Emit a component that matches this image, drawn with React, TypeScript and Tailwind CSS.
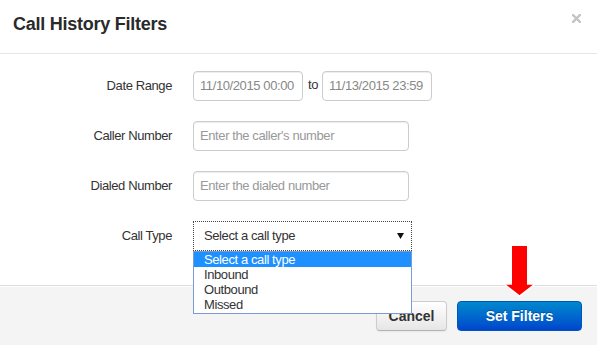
import React from 'react';

const FONT = "font-['Liberation_Sans',Arial,sans-serif]";

function Field({ label, children }: { label: string; children: React.ReactNode }) {
  return (
    <div className="flex items-center h-[30px]">
      <div className="w-[172px] text-right text-[13px] tracking-[-0.4px] text-[#333]">{label}</div>
      <div className="ml-[21px] flex items-center h-full">{children}</div>
    </div>
  );
}

const inputCls =
  'h-[30px] border border-[#ccc] rounded-[4px] bg-white px-[6px] text-[13px] tracking-[-0.4px] shadow-[inset_0_1px_1px_rgba(0,0,0,0.075)] flex items-center';

export default function App() {
  const options = ['Select a call type', 'Inbound', 'Outbound', 'Missed'];
  return (
    <div className={`${FONT} relative w-[597px] h-[345px] overflow-hidden bg-white`}>
      {/* Header */}
      <div className="h-[54px] border-b border-[#e5e5e5] flex items-start justify-between pl-[13px] pr-[16px] pt-[14px]">
        <h1 className="text-[18px] leading-[21px] font-bold tracking-[-0.25px] text-[#2a2a2a]">Call History Filters</h1>
        <svg width="9" height="9" viewBox="0 0 9 9">
          <path d="M1 1 L8 8 M8 1 L1 8" stroke="#c4c4c4" strokeWidth="2.4" strokeLinecap="square" />
        </svg>
      </div>

      {/* Body */}
      <div className="pt-[17px] pb-[34px] flex flex-col gap-[20px]">
        <Field label="Date Range">
          <div className={`${inputCls} w-[110px] text-[#888]`}>11/10/2015 00:00</div>
          <span className="ml-[5px] mr-[4px] text-[13px] tracking-[-0.4px] text-[#333] -mt-[3px]">to</span>
          <div className={`${inputCls} w-[110px] text-[#888]`}>11/13/2015 23:59</div>
        </Field>
        <Field label="Caller Number">
          <div className={`${inputCls} w-[216px] text-[#999]`}>Enter the caller's number</div>
        </Field>
        <Field label="Dialed Number">
          <div className={`${inputCls} w-[216px] text-[#999]`}>Enter the dialed number</div>
        </Field>
        <Field label="Call Type">
          <div className="relative w-[219px] h-[30px]">
            <div className="h-full border border-dotted border-[#444] bg-white flex items-center justify-between pl-[10px] pr-[7px] text-[13px] tracking-[-0.4px] text-[#333]">
              <span>Select a call type</span>
              <svg width="7" height="6" viewBox="0 0 7 6">
                <path d="M0 0 H7 L3.5 6 Z" fill="#111" />
              </svg>
            </div>
            <div className="absolute left-0 top-full w-[219px] border border-[#7a9bd4] bg-white pb-[1px] z-10">
              {options.map((o, i) => (
                <div
                  key={o}
                  className={`h-[15px] leading-[15px] pl-[10px] text-[13px] tracking-[-0.4px] ${
                    i === 0 ? 'bg-[#1e90ff] text-white' : 'text-[#333]'
                  }`}
                >
                  {o}
                </div>
              ))}
            </div>
          </div>
        </Field>
      </div>

      {/* Footer */}
      <div className="h-[60px] border-t border-[#ddd] bg-[#f4f4f4] shadow-[inset_0_1px_0_#fff] flex justify-end items-start pt-[15px] pr-[15px]">
        <button className="w-[71px] h-[30px] mr-[10px] rounded-[4px] border border-[#ccc] border-b-[#b3b3b3] bg-linear-to-b from-white to-[#e6e6e6] text-[14px] font-bold text-[#333] shadow-[inset_0_1px_0_rgba(255,255,255,0.2),0_1px_2px_rgba(0,0,0,0.05)]">
          Cancel
        </button>
        <button className="w-[125px] h-[30px] rounded-[4px] border border-[#0055bb] bg-linear-to-b from-[#0088cc] to-[#0044cc] text-[14px] font-bold text-white [text-shadow:0_-1px_0_rgba(0,0,0,0.25)]">
          Set Filters
        </button>
      </div>

      {/* Annotation arrow */}
      <svg className="absolute left-[503px] top-[246px]" width="33" height="51" viewBox="0 0 33 51">
        <path d="M1 38 H32 L16.5 50 Z" fill="#ff0000" stroke="#fff" strokeWidth="1.5" strokeLinejoin="miter" />
        <rect x="9" y="0" width="15" height="39" fill="#ff0000" />
      </svg>
    </div>
  );
}
